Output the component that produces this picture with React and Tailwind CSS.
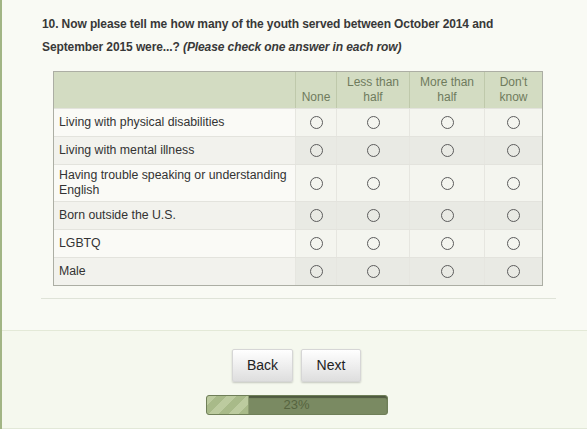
import React from "react";

const rows = [
  { label: "Living with physical disabilities", tall: false },
  { label: "Living with mental illness", tall: false },
  { label: "Having trouble speaking or understanding English", tall: true },
  { label: "Born outside the U.S.", tall: false },
  { label: "LGBTQ", tall: false },
  { label: "Male", tall: false },
];

function Radio() {
  return <span className="block w-[13px] h-[13px] rounded-full border border-[#5c5c5c]" />;
}

export default function App() {
  return (
    <div className="w-[587px] h-[429px] overflow-hidden bg-[#f9faf4] border-l-2 border-[#a2b585] font-['Liberation_Sans',Arial,sans-serif] flex flex-col">
      <div className="h-[330px] pt-[13px] pl-[39px] w-[556px] shrink-0">
        <p className="pl-[1px] text-[12px] leading-[23px] font-bold text-[#383838] tracking-[-0.1px] whitespace-nowrap">
          10. Now please tell me how many of the youth served between October 2014 and
          <br />
          September 2015 were...? <i>(Please check one answer in each row)</i>
        </p>
        <div className="ml-[12px] mt-[12px] w-[490px] border border-[#acaea4] text-[12px]">
          <div className="grid grid-cols-[241px_41px_73px_75px_58px] h-[36px] bg-[#d3dcc2] text-[#6f7b5d] leading-[15px] text-center">
            <div />
            <div className="border-l border-[#bfc9ab] flex items-end justify-center pb-[3px]">None</div>
            <div className="border-l border-[#bfc9ab] flex items-end justify-center pb-[3px]">Less than<br />half</div>
            <div className="border-l border-[#bfc9ab] flex items-end justify-center pb-[3px]">More than<br />half</div>
            <div className="border-l border-[#bfc9ab] flex items-end justify-center pb-[3px]">Don't<br />know</div>
          </div>
          {rows.map((r, i) => {
            const even = i % 2 === 1;
            return (
              <div
                key={r.label}
                className={`grid grid-cols-[241px_41px_73px_75px_58px] border-t border-[#e3e3dd] ${r.tall ? "h-[37px]" : "h-[28px]"}`}
              >
                <div className={`flex items-center pl-[5px] pr-[4px] text-[12.3px] leading-[15px] text-[#333] ${even ? "bg-[#f2f2ed]" : "bg-[#fafaf6]"}`}>
                  {r.label}
                </div>
                {[0, 1, 2, 3].map((c) => (
                  <div
                    key={c}
                    className={`flex items-center justify-center border-l border-[#e6e6e0] ${even ? "bg-[#e9eae4]" : "bg-[#f4f5ef]"}`}
                  >
                    <Radio />
                  </div>
                ))}
              </div>
            );
          })}
        </div>
        <div className="mt-[12px] h-px bg-[#dfe3d8] w-[515px]" />
      </div>
      <div className="flex-1 border-t border-[#e3e9d7] border-b border-b-[#e2e8d8] bg-[#f5f8ee] flex flex-col items-center pt-[18px] pl-[4px]">
        <div className="flex gap-[8px]">
          <button className="w-[61px] h-[33px] text-[14px] text-[#222] border border-[#d6d6d6] rounded-[2px] bg-gradient-to-b from-[#ffffff] to-[#dedede] shadow-[0_1px_2px_rgba(0,0,0,0.2)]">
            Back
          </button>
          <button className="w-[60px] h-[33px] text-[14px] text-[#222] border border-[#d6d6d6] rounded-[2px] bg-gradient-to-b from-[#ffffff] to-[#dedede] shadow-[0_1px_2px_rgba(0,0,0,0.2)]">
            Next
          </button>
        </div>
        <div className="relative mt-[13px] w-[182px] h-[20px] rounded-[3px] bg-[#7a8a62] border border-[#6f7f58] shadow-[inset_0_2px_1px_rgba(0,0,0,0.35)] overflow-hidden">
          <div className="h-full w-[42px] bg-[repeating-linear-gradient(135deg,#bccb9f_0px,#bccb9f_7px,#a8ba89_7px,#a8ba89_14px)] border-r border-[#8d9d72]" />
          <span className="absolute inset-0 flex items-center justify-center text-[13px] text-[#56643f]">23%</span>
        </div>
      </div>
    </div>
  );
}
